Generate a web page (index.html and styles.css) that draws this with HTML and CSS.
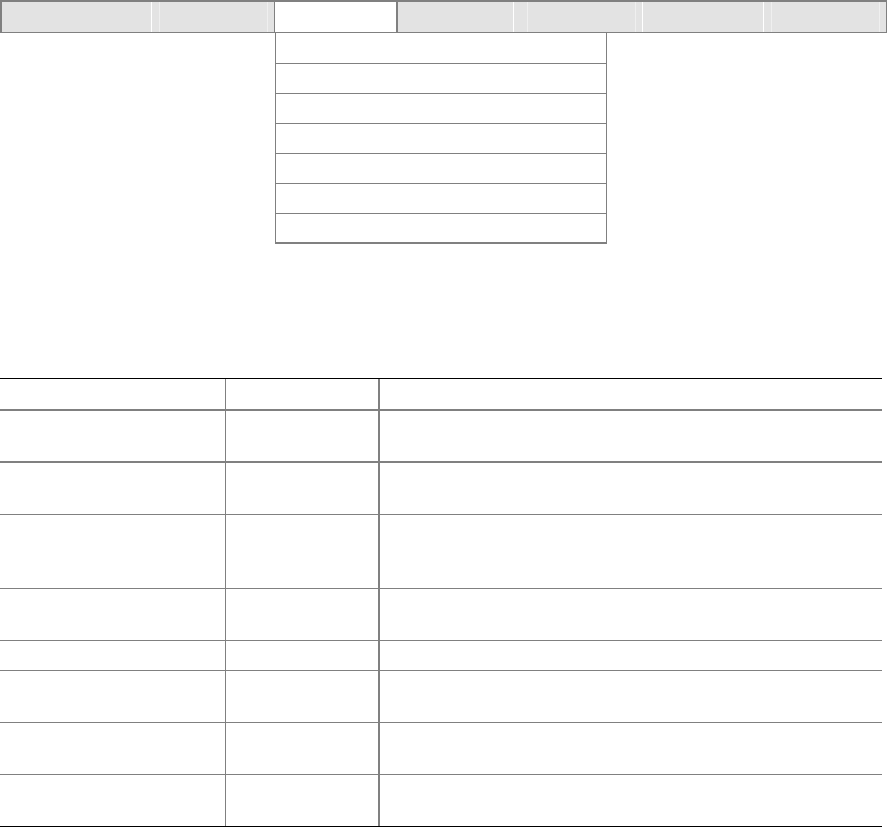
FILE: index.html
```html
<!DOCTYPE html>
<html>
<head>
<meta charset="utf-8">
<link rel="stylesheet" href="styles.css">
</head>
<body>
<div class="page">
  <nav class="tabs">
    <div class="tab tab-1 sep"></div>
    <div class="tab tab-2 inset"><span class="inner"></span></div>
    <div class="tab tab-3 active"></div>
    <div class="tab tab-4 sep"></div>
    <div class="tab tab-5 sep inset"><span class="inner inner-5"></span></div>
    <div class="tab tab-6 sep"></div>
    <div class="tab tab-7 inset"><span class="inner"></span></div>
  </nav>
  <ul class="menu">
    <li class="menu-item first"></li>
    <li class="menu-item"></li>
    <li class="menu-item"></li>
    <li class="menu-item"></li>
    <li class="menu-item"></li>
    <li class="menu-item"></li>
    <li class="menu-item last"></li>
  </ul>
  <div class="tbl">
    <div class="cell c1 r-head"></div><div class="cell c2 r-head"></div><div class="cell c3 r-head"></div>
    <div class="cell c1 r1"></div><div class="cell c2 r1"></div><div class="cell c3 r1"></div>
    <div class="cell c1 r2"></div><div class="cell c2 r2"></div><div class="cell c3 r2"></div>
    <div class="cell c1 r3"></div><div class="cell c2 r3"></div><div class="cell c3 r3"></div>
    <div class="cell c1 r4"></div><div class="cell c2 r4"></div><div class="cell c3 r4"></div>
    <div class="cell c1 r5"></div><div class="cell c2 r5"></div><div class="cell c3 r5"></div>
    <div class="cell c1 r6"></div><div class="cell c2 r6"></div><div class="cell c3 r6"></div>
    <div class="cell c1 r7"></div><div class="cell c2 r7"></div><div class="cell c3 r7"></div>
    <div class="cell c1 r8"></div><div class="cell c2 r8"></div><div class="cell c3 r8"></div>
  </div>
</div>
</body>
</html>
```

FILE: styles.css
```css
* { box-sizing: border-box; }
html, body { margin: 0; padding: 0; background: #fff; font-family: "Liberation Sans", Arial, sans-serif; }
.page { position: relative; width: 887px; }

.tabs {
  display: flex;
  width: 887px;
  height: 33px;
  background: #e3e3e3;
  border-top: 2px solid #808080;
  border-left: 2px solid #808080;
  border-right: 1px solid #808080;
  border-bottom: 1px solid #808080;
}
.tab { height: 30px; position: relative; }
.tab.sep { border-right: 1px solid #ffffff; }
.tab-1 { width: 150px; }
.tab-2 { width: 122px; }
.tab-3 { width: 124px; }
.tab-4 { width: 116px; }
.tab-5 { width: 129px; }
.tab-6 { width: 121px; }
.tab-7 { width: 122px; }
.tab.active {
  background: #ffffff;
  border-left: 1px solid #808080;
  border-right: 2px solid #808080;
}
.tab.inset { display: flex; padding: 0 6px 0 7px; }
.inner {
  flex: 1;
  border-left: 1px solid #efefef;
  border-right: 1px solid #efefef;
}
.tab-5 .inner-5 { margin-left: 6px; }

.menu {
  position: absolute;
  left: 275px;
  top: 33px;
  width: 332px;
  margin: 0;
  padding: 0;
  list-style: none;
}
.menu-item {
  height: 30px;
  border-left: 1px solid #808080;
  border-right: 1px solid #808080;
  border-bottom: 1px solid #808080;
  background: #fff;
}
.menu-item.first { height: 31px; }
.menu-item.last { height: 30px; border-bottom-width: 2px; }

.tbl {
  display: grid;
  grid-template-columns: 226px 154px 502px;
  width: 882px;
  margin-top: 345px;
  border-top: 1px solid #000;
  border-bottom: 1px solid #000;
}
.cell { border-bottom: 1px solid #808080; }
.c1 { border-right: 1px solid #808080; }
.c2 { border-right: 2px solid #808080; }
.r-head { height: 32px; border-bottom-width: 2px; }
.r1 { height: 52px; border-bottom-width: 2px; }
.r2 { height: 52px; }
.r3 { height: 74px; }
.r4 { height: 52px; }
.r5 { height: 30px; }
.r6 { height: 52px; }
.r7 { height: 52px; }
.r8 { height: 51px; border-bottom: none; }
```
